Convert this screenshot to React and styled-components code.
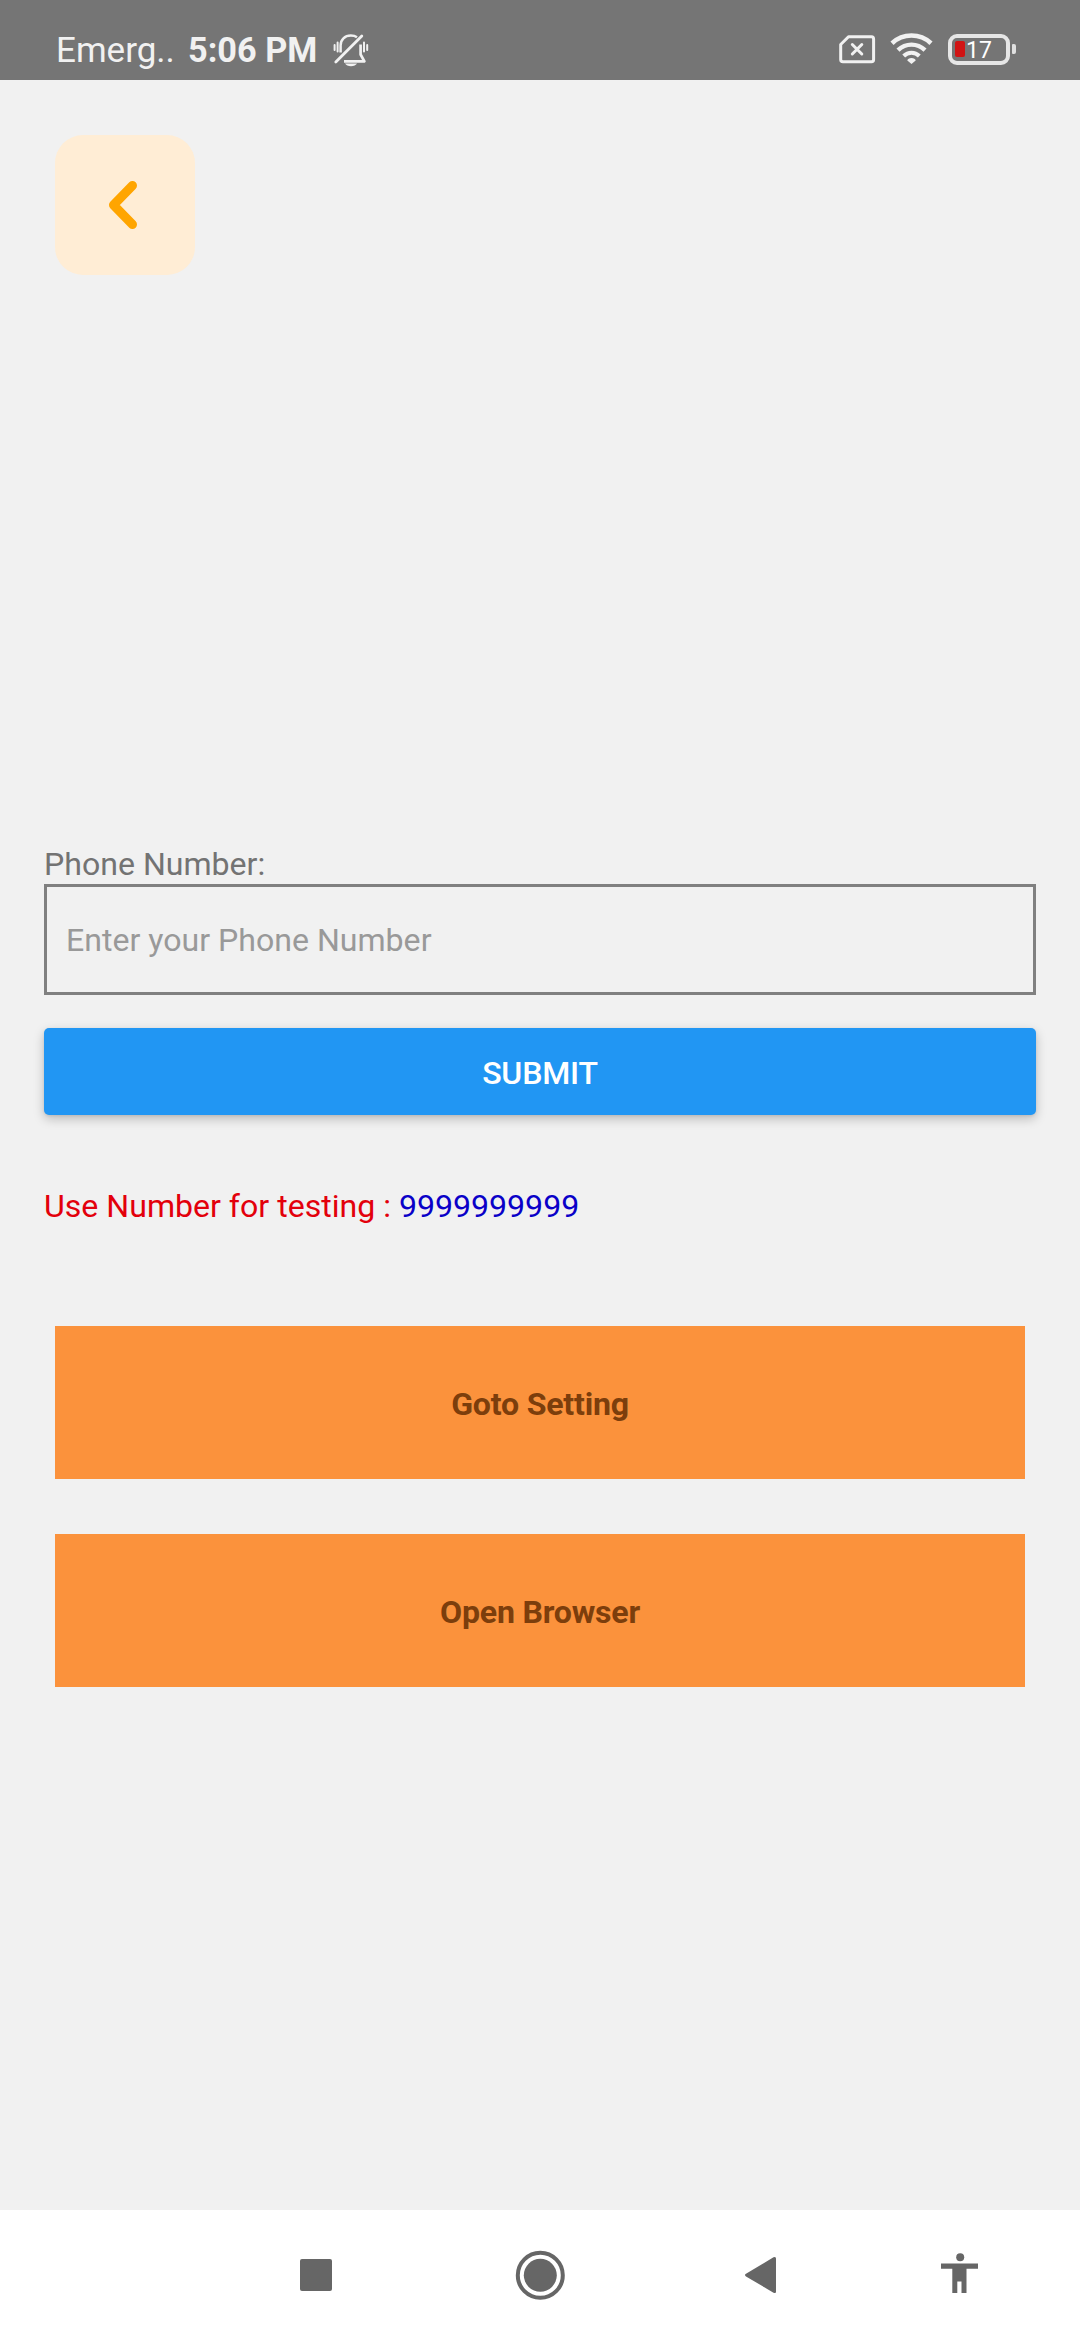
import React from "react";
import styled, { createGlobalStyle } from "styled-components";

const GlobalStyle = createGlobalStyle`
  *, *::before, *::after { box-sizing: border-box; }
  body { margin: 0; background: #f1f1f1; }
`;

const Screen = styled.div`
  display: flex;
  flex-direction: column;
  width: 1080px;
  height: 2340px;
  background: #f1f1f1;
  font-family: Roboto, "Liberation Sans", sans-serif;
  font-size: 32.1px;
  line-height: 40px;
  overflow: hidden;
`;

const StatusBar = styled.header`
  display: flex;
  justify-content: space-between;
  flex: none;
  height: 80px;
  padding: 30px 64px 0 56px;
  background: #757575;
  color: #f1f1f1;
`;

const StatusGroup = styled.div`
  display: flex;
  align-items: flex-start;
  height: 40px;
`;

const Carrier = styled.span`
  width: 132px;
  font-size: 35px;
  line-height: 41px;
  white-space: nowrap;
`;

const Clock = styled.span`
  width: 144px;
  font-size: 34.3px;
  font-weight: 700;
  line-height: 40px;
  white-space: nowrap;
`;

const Icon = styled.svg`
  display: block;
  flex: none;
  margin-right: ${(p) => p.$gap || 0}px;
`;

const BackButton = styled.button`
  display: flex;
  align-items: center;
  justify-content: center;
  flex: none;
  width: 140px;
  height: 140px;
  margin: 55px 0 0 55px;
  padding: 0;
  border: 0;
  border-radius: 28px;
  background: #ffedd5;
`;

const Form = styled.form`
  display: flex;
  flex-direction: column;
  flex: none;
  margin: 569px 44px 0;
`;

const Label = styled.label`
  height: 40px;
  color: #737373;
`;

const Input = styled.input`
  height: 111px;
  padding: 0 19px;
  border: 3px solid #808080;
  border-radius: 0;
  outline: 0;
  background: transparent;
  color: #333;
  font: inherit;

  &::placeholder {
    color: #999;
    opacity: 1;
  }
`;

const Submit = styled.button`
  height: 87px;
  margin-top: 33px;
  padding: 2px 0 0;
  border: 0;
  border-radius: 5px;
  background: #2196f3;
  box-shadow: 0 4px 11px rgba(0, 0, 0, 0.22), 0 1px 3px rgba(0, 0, 0, 0.08);
  color: #fff;
  font: inherit;
  font-weight: 500;
  letter-spacing: -0.2px;
`;

const Hint = styled.p`
  margin: 71px 0 0;
  color: #e3000b;
`;

const HintNumber = styled.span`
  color: #0a00c8;
`;

const Actions = styled.section`
  display: flex;
  flex-direction: column;
  gap: 55px;
  flex: none;
  margin: 100px 55px 0;
`;

const ActionButton = styled.button`
  height: 153px;
  padding: 3px 0 0;
  border: 0;
  background: #fb923c;
  color: #7c3e0c;
  font: inherit;
  font-weight: 700;
  letter-spacing: -0.2px;
`;

const NavBar = styled.nav`
  display: flex;
  align-items: center;
  flex: none;
  height: 130px;
  margin-top: auto;
  padding-left: 300px;
  background: #fff;
`;

function SilentIcon() {
  return (
    <Icon width="38" height="37" viewBox="0 0 38 37" fill="none" stroke="#f1f1f1">
      <path d="M8.6 21.5V14.5C8.6 8.5 12.8 4.6 18.8 4.6C21.6 4.6 23.6 5.3 25 6.3" strokeWidth="2.5" />
      <path d="M28.6 13.5V23.5L32.4 30.3H12" strokeWidth="2.7" strokeLinejoin="round" />
      <path d="M3.8 31L29.8 5" strokeWidth="2.8" strokeLinecap="round" />
      <path d="M2.6 14V19M5.6 11.5V20.5M32 11.5V20.5M35.2 14V19" strokeWidth="2" strokeLinecap="round" />
      <path d="M13 32.6H25C23.5 36 14.5 36 13 32.6Z" fill="#f1f1f1" stroke="none" />
    </Icon>
  );
}

function NoSimIcon() {
  return (
    <Icon $gap={14} width="37" height="29" viewBox="0 0 37 29" fill="none" stroke="#f1f1f1">
      <path d="M9.5 1.7H32.5Q34.6 1.7 34.6 4V24.5Q34.6 26.8 32.5 26.8H4Q1.7 26.8 1.7 24.5V9.5Z" strokeWidth="3" strokeLinejoin="round" />
      <path d="M13.3 9.5L22.8 19M22.8 9.5L13.3 19" strokeWidth="3" strokeLinecap="round" />
    </Icon>
  );
}

function WifiIcon() {
  return (
    <Icon $gap={15} width="43" height="32" viewBox="0 0 43 32" fill="none" stroke="#f1f1f1">
      <path d="M2 10.2C13 0 30 0 41 10.2" strokeWidth="4.6" />
      <path d="M8 17.2C15.7 9.7 27.3 9.7 35 17.2" strokeWidth="4.4" />
      <path d="M13.7 23C18 18.7 25 18.7 29.3 23" strokeWidth="4" />
      <path d="M17.3 27.5C17.3 24 25.7 24 25.7 27.5L21.5 31Z" fill="#f1f1f1" stroke="none" />
    </Icon>
  );
}

const Battery = styled.div`
  display: flex;
  align-items: center;
  height: 31px;
  margin-top: 3.5px;
`;

const BatteryCell = styled.div`
  display: flex;
  align-items: center;
  width: 62px;
  height: 31px;
  padding-left: 3px;
  border: 4px solid #e6e6e6;
  border-radius: 9px;
  font-size: 23px;
  font-weight: 400;
  line-height: 25px;
  color: #fff;
`;

const BatteryLevel = styled.span`
  width: 10px;
  height: 16px;
  margin-right: 1px;
  border-radius: 2px;
  background: #d01414;
`;

const BatteryText = styled.span`
  padding-top: 2px;
`;

const BatteryTip = styled.span`
  width: 4px;
  height: 10px;
  margin-left: 2px;
  border-radius: 1px 2px 2px 1px;
  background: #e0e0e0;
`;

const RaisedGroup = styled.div`
  display: flex;
  margin-top: ${(p) => p.$top}px;
`;

export default function App() {
  return (
    <>
      <GlobalStyle />
      <Screen>
        <StatusBar>
          <StatusGroup>
            <Carrier>Emerg..</Carrier>
            <Clock>5:06 PM</Clock>
            <RaisedGroup $top={1}>
              <SilentIcon />
            </RaisedGroup>
          </StatusGroup>
          <StatusGroup>
            <RaisedGroup $top={5}>
              <NoSimIcon />
            </RaisedGroup>
            <RaisedGroup $top={3}>
              <WifiIcon />
            </RaisedGroup>
            <Battery>
              <BatteryCell>
                <BatteryLevel />
                <BatteryText>17</BatteryText>
              </BatteryCell>
              <BatteryTip />
            </Battery>
          </StatusGroup>
        </StatusBar>

        <BackButton type="button" aria-label="Back">
          <Icon width="140" height="140" viewBox="0 0 140 140" fill="none" stroke="#ffa500">
            <path d="M77.5 50.5L58.5 70L77.5 89.5" strokeWidth="9" strokeLinecap="round" strokeLinejoin="round" />
          </Icon>
        </BackButton>

        <Form onSubmit={(e) => e.preventDefault()}>
          <Label htmlFor="phone">Phone Number:</Label>
          <Input id="phone" type="tel" placeholder="Enter your Phone Number" />
          <Submit type="submit">SUBMIT</Submit>
          <Hint>
            Use Number for testing : <HintNumber>9999999999</HintNumber>
          </Hint>
        </Form>

        <Actions>
          <ActionButton type="button">Goto Setting</ActionButton>
          <ActionButton type="button">Open Browser</ActionButton>
        </Actions>

        <NavBar>
          <Icon $gap={183} width="32" height="32" viewBox="0 0 32 32" fill="#666">
            <rect width="32" height="32" rx="2" />
          </Icon>
          <Icon $gap={180} width="50" height="50" viewBox="0 0 50 50" fill="#666">
            <circle cx="25.3" cy="25.3" r="22.5" fill="none" stroke="#666" strokeWidth="4" />
            <circle cx="25.3" cy="25.3" r="16.5" />
          </Icon>
          <Icon $gap={164} width="32" height="38" viewBox="0 0 32 38" fill="#666">
            <path d="M1 17.8L28.5 1.3Q31 0.3 31 2.5V35.7Q31 37.7 28.5 36.7L1 20.4Q-1 19 1 17.8Z" />
          </Icon>
          <Icon width="38" height="44" viewBox="0 0 38 44" fill="#666">
            <circle cx="19.2" cy="4.2" r="4" />
            <path d="M0 10.4H37V15.8H25.5V40H20.5V28.4H16.3V40H11.3V15.8H0Z" />
          </Icon>
        </NavBar>
      </Screen>
    </>
  );
}
